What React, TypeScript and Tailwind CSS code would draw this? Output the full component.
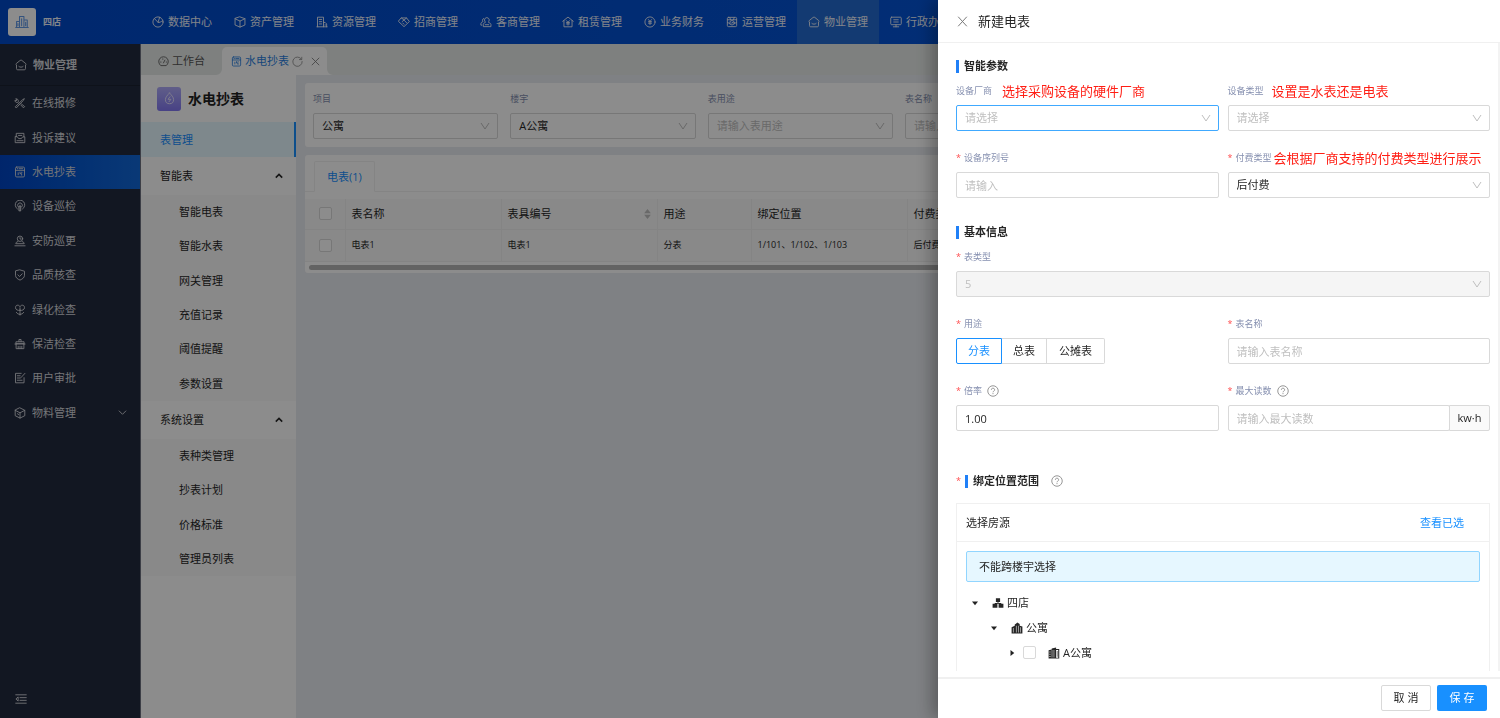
import type { ReactNode } from "react";

type Glyph = ReactNode;

function Icon({ children, className = "size-3" }: { children: ReactNode; className?: string }) {
  return (
    <svg
      viewBox="0 0 16 16"
      fill="none"
      stroke="currentColor"
      strokeWidth="1.2"
      strokeLinecap="round"
      strokeLinejoin="round"
      aria-hidden="true"
      className={`shrink-0 ${className}`}
    >
      {children}
    </svg>
  );
}

const houseSmile: Glyph = (
  <>
    <path d="M7 1.800a1.600 1.600 0 0 1 2 0l5.400 4.400c.4.400.5.800.3 1.400l-.7.400v4.800a1.600 1.600 0 0 1-1.600 1.600H3.600A1.600 1.600 0 0 1 2 12.800V8l-.7-.4c-.2-.6-.1-1 .3-1.400z" />
    <path d="M5.200 10c1.400 1.300 4.200 1.300 5.600 0" />
  </>
);

const meter: Glyph = (
  <>
    <rect x="2" y="1.400" width="12" height="13.200" rx="1.600" />
    <path d="M2 5.800h12M4.400 3.600h.6M7 3.600h4.600M5.600 9v2.600M8 8.200v2h2.200v2M10.400 8.200v.6" />
  </>
);

const navItems: { label: string; icon: Glyph }[] = [
  {
    label: "数据中心",
    icon: (
      <>
        <circle cx="8" cy="8" r="6.800" />
        <path d="M3.200 3.400 8 8.400c1.600.8 3.800-.6 6.400-2.200M8 8.400l2.200-6.600" />
      </>
    ),
  },
  {
    label: "资产管理",
    icon: <path d="M8 1.200 14.600 3.600v8.400L8 14.800 1.400 12V3.600zM1.400 3.600 8 6.800l6.600-3.200M8 6.800v8" />,
  },
  {
    label: "资源管理",
    icon: (
      <>
        <path d="M2 14.400V1.600h8v12.800M1.200 14.400h13.600M10 8.600h2.200l2 2v3.800" />
        <path d="M4.400 4.600h3.200M4.400 7.600h3.200M4.400 10.600h3.200M12.200 11.600v.8" />
      </>
    ),
  },
  {
    label: "招商管理",
    icon: (
      <>
        <path d="M4.600 2.600h6.800L15.200 7.400 8 14.200.8 7.400z" />
        <path d="M4.600 2.600 8 5.400l3.400-2.800M5.600 7.400 8 5.400l3.600 3.800M6.400 9.400l1.600 1.600" />
      </>
    ),
  },
  {
    label: "客商管理",
    icon: (
      <>
        <path d="M6.600 7.400a3.200 3.200 0 1 1 5 0v1.400c1.600.4 3 1.200 3 2.600v2.800H4.400v-2.800c0-1.400 1-2.200 2.200-2.600z" />
        <path d="M4.800 3.400C3 4 2.800 6 4 7.400 2.400 8 1.200 8.800 1.200 10.400v1.800h1.200M7 11.600h4.600" />
      </>
    ),
  },
  {
    label: "租赁管理",
    icon: (
      <>
        <path d="M1 7 8 1.400 15 7M2.600 6v8.400h10.800V6" />
        <path d="M6 6.200 8 8.400l2-2.200M6 8.800h4M6 10.600h4M8 8.400v3.800" />
      </>
    ),
  },
  {
    label: "业务财务",
    icon: (
      <>
        <circle cx="8" cy="8" r="6.800" />
        <path d="M6 4.800 8 7.200l2-2.400M6 7.600h4M6 9.600h4M8 7.200v4.200" />
      </>
    ),
  },
  {
    label: "运营管理",
    icon: (
      <>
        <rect x="1.800" y="1.800" width="12.400" height="12.400" rx="1.600" />
        <circle cx="8" cy="9" r="3" />
        <path d="M2 5h12M5 2l1.200 3M11 2 9.800 5M2 8.400l3 2M14 8.400l-3 2M7 9l.8.8L9.200 8.200" />
      </>
    ),
  },
  { label: "物业管理", icon: houseSmile },
  {
    label: "行政办公",
    icon: (
      <>
        <rect x="1" y="1.600" width="14" height="10" rx="1.200" />
        <path d="M5 5h6M5 8h6M8 11.600v2.800M4.400 14.400h7.200" />
      </>
    ),
  },
];

const sideItems: { label: string; icon: Glyph; expandable?: boolean }[] = [
  {
    label: "在线报修",
    icon: (
      <>
        <path d="M2 12.800 11.400 3.600 13.800 2.200 12.400 4.600 3.400 14.200zM10 9.400l4.200 3.400-1.600 1.600L9 10.600" />
        <path d="M6.600 7 5.600 6c.6-2-1-4-3.400-3.600l1.600 1.600-1.200 1.400L1.400 4.200C1 6.200 2.800 7.800 4.600 7.200l1 1" />
      </>
    ),
  },
  {
    label: "投诉建议",
    icon: <path d="M3 6.400V1.800h10.200v4.600M1.600 6.400v7.800h12.800V6.400l-3 .2-1.600 2.200H6.200L4.600 6.600zM6 4.600h4.400M4 11.600h8" />,
  },
  { label: "水电抄表", icon: meter },
  {
    label: "设备巡检",
    icon: (
      <>
        <path d="M4.600 12A6.400 6.400 0 1 1 11.400 12" />
        <path d="M5.600 9.200a3.200 3.200 0 1 1 4.800 0M8 7v7.400M7 8.400h2v6H7z" />
      </>
    ),
  },
  {
    label: "安防巡更",
    icon: (
      <>
        <circle cx="8" cy="5" r="3.600" />
        <path d="M8 3.400v2h1.600M5 8.800c-1.800.5-2.600 1.400-2.600 2.800h11.200c0-1.400-.8-2.300-2.600-2.800M1.200 14.400h13.600" />
      </>
    ),
  },
  {
    label: "品质核查",
    icon: (
      <>
        <path d="M8 1.200 14 3v5.400c0 3-2.600 5-6 6.400-3.400-1.400-6-3.400-6-6.400V3z" />
        <path d="m5.200 7.800 2.200 2.200 3.600-3.600" />
      </>
    ),
  },
  {
    label: "绿化检查",
    icon: (
      <>
        <path d="M8 8.400C5 9.200 2 7.600 2 4.800c0-2 1.200-3.200 3-3.200 1.400 0 2.400.8 3 2 .6-1.200 1.600-2 3-2 1.800 0 3 1.200 3 3.200 0 2.800-3 4.400-6 3.600z" />
        <path d="M8 5v9.800M8 13.800c-2.200 0-4-1-4.800-2.600M8 13.800c2.200 0 4-1 4.800-2.600" />
      </>
    ),
  },
  {
    label: "保洁检查",
    icon: <path d="M6.600 5V2h2.800v3M2.600 8V5h10.800v3M2.800 8v6.200h10.400V8zM1.200 8h13.600M5.600 14.200V11M8 14.200V11M10.400 14.200V11" />,
  },
  {
    label: "用户审批",
    icon: <path d="M9.600 1.800H2v12.600h11.400V7.600M14.600 1.800 9.400 7.400M4.400 5h3.800M4.400 8h4M4.400 11h6.400" />,
  },
  {
    label: "物料管理",
    expandable: true,
    icon: <path d="M8 1.200 14.400 4.400v7.200L8 14.800l-6.400-3.200V4.400zM1.600 4.400 8 7.800l6.400-3.400M8 7.800v7M4.600 9l1.600 1" />,
  },
];

function Chevron({ className = "" }: { className?: string }) {
  return (
    <svg
      viewBox="0 0 10 10"
      fill="none"
      stroke="currentColor"
      strokeWidth="1"
      aria-hidden="true"
      className={`pointer-events-none size-[10px] shrink-0 ${className}`}
    >
      <path d="M1 2 5 8 9 2" />
    </svg>
  );
}

function SelectBox({
  id,
  value,
  placeholder = false,
  focused = false,
  disabled = false,
}: {
  id: string;
  value: string;
  placeholder?: boolean;
  focused?: boolean;
  disabled?: boolean;
}) {
  return (
    <div className="grid items-center">
      <select
        id={id}
        disabled={disabled}
        className={`col-start-1 row-start-1 h-[26px] w-full appearance-none rounded-[2px] border pr-6 pl-2 text-[11px] leading-4 opacity-100 outline-none ${
          focused ? "border-[#40a9ff]" : "border-[#d9d9d9]"
        } ${disabled ? "bg-[#f5f5f5]" : "bg-white"} ${
          placeholder || disabled ? "text-[#bfbfbf]" : "text-[#262626]"
        }`}
      >
        <option>{value}</option>
      </select>
      <Chevron className="col-start-1 row-start-1 mr-2 justify-self-end text-[#bfbfbf]" />
    </div>
  );
}

function FilterField({ id, label, value, placeholder }: { id: string; label: string; value: string; placeholder?: boolean }) {
  return (
    <div className="flex flex-col gap-1">
      <label htmlFor={id} className="text-[9px] leading-5 text-[#8690b0]">
        {label}
      </label>
      <SelectBox id={id} value={value} placeholder={placeholder} />
    </div>
  );
}

function Help() {
  return (
    <svg viewBox="0 0 16 16" fill="none" stroke="#8c8c8c" strokeWidth="1.2" className="size-3 shrink-0" aria-hidden="true">
      <circle cx="8" cy="8" r="7" />
      <path d="M5.800 6.400a2.200 2.100 0 1 1 3.200 1.800c-.7.400-1 .7-1 1.500M8 10.800v1.400" />
    </svg>
  );
}

function Field({
  id,
  label,
  required = false,
  help = false,
  note,
  children,
}: {
  id: string;
  label: string;
  required?: boolean;
  help?: boolean;
  note?: ReactNode;
  children: ReactNode;
}) {
  return (
    <div className="flex flex-col gap-1">
      <div className="flex h-5 items-center whitespace-nowrap">
        {required && <span className="w-2 text-[9px] leading-5 text-[#ff4d4f]">*</span>}
        <label htmlFor={id} className="text-[9px] leading-5 text-[#8690b0]">
          {label}
        </label>
        {help && (
          <span className="ml-[5px] flex">
            <Help />
          </span>
        )}
        {note}
      </div>
      {children}
    </div>
  );
}

function SectionTitle({ children }: { children: ReactNode }) {
  return (
    <h3 className="flex h-5 items-center gap-[5px] text-[11px] leading-5 font-bold text-[#262626]">
      <span className="h-[13px] w-[3px] bg-[#2080f7]" />
      {children}
    </h3>
  );
}

const inputClass =
  "h-[26px] w-full min-w-0 rounded-[2px] border border-[#d9d9d9] bg-white px-2 text-[11px] leading-4 text-[#262626] outline-none placeholder:text-[#bfbfbf]";

function TopBar() {
  return (
    <header className="flex h-11 shrink-0 items-stretch overflow-hidden bg-linear-to-r from-[#0049c8] to-[#085ade] text-[#eef2fb]">
      <div className="flex w-[141px] shrink-0 items-center gap-[7px] pl-2">
        <div className="flex size-7 items-center justify-center rounded-[3px] bg-white text-[#5f97e6]">
          <Icon className="size-[14px]">
            <path d="M.8 14.200h14.400M1.800 14V7.400h3.400M5.200 14V1.800h5V14M10.200 5.800h3.800V14M3.400 9.600v2.600M7.600 4.400v7.800M12.200 8.200v4" />
          </Icon>
        </div>
        <span className="text-[9px] leading-4 font-bold">四店</span>
      </div>
      <nav className="flex">
        {navItems.map((item) => (
          <a
            key={item.label}
            href="#"
            className={`flex w-[82px] shrink-0 items-center justify-center gap-1 text-[11px] leading-4 whitespace-nowrap ${
              item.label === "物业管理" ? "bg-[#246bd0]" : ""
            }`}
          >
            <Icon>{item.icon}</Icon>
            {item.label}
          </a>
        ))}
      </nav>
    </header>
  );
}

function Sidebar() {
  return (
    <aside className="flex w-[141px] shrink-0 flex-col border-r border-[#6d7180] bg-[#222a3e] text-[#d5d7dc]">
      <div className="flex h-[42px] items-center gap-[6px] border-b border-[#1b2230] pl-[15px] text-[11px] leading-4 font-bold">
        <Icon>{houseSmile}</Icon>
        物业管理
      </div>
      <nav className="grid h-[344px] grid-rows-10">
        {sideItems.map((item) => (
          <a
            key={item.label}
            href="#"
            className={`flex items-center gap-[6px] pr-[13px] pl-[14px] text-[11px] leading-4 ${
              item.label === "水电抄表" ? "bg-linear-to-r from-[#0044c4] to-[#1268d8]" : ""
            }`}
          >
            <Icon>{item.icon}</Icon>
            {item.label}
            {item.expandable && (
              <svg viewBox="0 0 10 10" fill="none" stroke="currentColor" className="ml-auto size-[9px]" aria-hidden="true">
                <path d="M1 3l4 4 4-4" />
              </svg>
            )}
          </a>
        ))}
      </nav>
      <button type="button" aria-label="收起菜单" className="mt-auto mb-[13px] ml-[15px] flex size-3 items-center">
        <Icon>
          <path d="M1 2.400h14M6.600 6.200H15M6.600 9.800H15M1 13.600h14M3.800 5.600 1.200 8l2.600 2.400z" />
        </Icon>
      </button>
    </aside>
  );
}

function TabStrip() {
  return (
    <div className="flex h-[31px] shrink-0 items-end bg-[#e6eae8] text-[11px] leading-4">
      <a href="#" className="flex h-[28px] w-[81px] items-center gap-[3px] pl-[17px] text-[#555]">
        <Icon className="size-[11px]">
          <path d="M3.600 13.600a7 7 0 1 1 8.800 0zM8 10l2-4M3.800 8.800h.6M7 4.200v.6M12 8.800h.4" />
        </Icon>
        工作台
      </a>
      <div className="relative flex h-[28px] items-center gap-[3px] rounded-t-[5px] bg-white pr-[6px] pl-[9px] text-[#2b7fe0]">
        <svg viewBox="0 0 6 6" className="absolute bottom-0 -left-[6px] size-[6px] fill-white" aria-hidden="true">
          <path d="M6 0v6H0a6 6 0 0 0 6-6z" />
        </svg>
        <svg viewBox="0 0 6 6" className="absolute -right-[6px] bottom-0 size-[6px] fill-white" aria-hidden="true">
          <path d="M0 0v6h6a6 6 0 0 1-6-6z" />
        </svg>
        <Icon className="size-[11px]">{meter}</Icon>
        <span>水电抄表</span>
        <button type="button" aria-label="刷新" className="text-[#8c8c8c]">
          <Icon className="size-[11px]">
            <path d="M13.600 4.400A6.800 6.800 0 1 0 14.800 8M14.200 1.800v3.400h-3.400" />
          </Icon>
        </button>
        <button type="button" aria-label="关闭标签" className="ml-1 text-[#777]">
          <Icon className="size-[11px]">
            <path d="M3 3l10 10M13 3 3 13" />
          </Icon>
        </button>
      </div>
    </div>
  );
}

function MenuGroup({ title, children }: { title: string; children: ReactNode }) {
  return (
    <>
      <button type="button" className="flex h-[38px] w-full items-center justify-between pr-[13px] pl-[19px] text-[11px] leading-4 text-[#262626]">
        {title}
        <svg viewBox="0 0 10 10" fill="none" stroke="currentColor" strokeWidth="2" className="size-2" aria-hidden="true">
          <path d="M1 7l4-4 4 4" />
        </svg>
      </button>
      {children}
    </>
  );
}

function SubItem({ label }: { label: string }) {
  return (
    <a href="#" className="flex items-center pl-[38px] text-[11px] leading-4 text-[#262626]">
      {label}
    </a>
  );
}

function ModuleMenu() {
  return (
    <nav className="w-[155px] shrink-0 bg-white">
      <div className="flex h-[47px] items-center gap-[7px] pl-4">
        <div className="flex size-6 items-center justify-center rounded-[3px] bg-linear-to-b from-[#b0abf8] to-[#8377f2] text-[#e4e0ff]">
          <Icon className="size-[13px]">
            <path d="M8 1.200c2.600 3 5 5 5 8.200a5 5 0 0 1-10 0C3 6.200 5.400 4.200 8 1.200z" />
            <path d="M8.600 5.800 6.200 9h3.600l-2.400 3" />
          </Icon>
        </div>
        <h1 className="text-sm leading-5 font-bold text-[#222]">水电抄表</h1>
      </div>
      <a href="#" className="flex h-[35px] items-center border-r-2 border-[#1890ff] bg-[#e6f7ff] pl-[19px] text-[11px] leading-4 text-[#1890ff]">
        表管理
      </a>
      <MenuGroup title="智能表">
        <div className="grid h-[206px] grid-rows-6 bg-[#fafafa]">
          {["智能电表", "智能水表", "网关管理", "充值记录", "阈值提醒", "参数设置"].map((l) => (
            <SubItem key={l} label={l} />
          ))}
        </div>
      </MenuGroup>
      <MenuGroup title="系统设置">
        <div className="grid h-[137px] grid-rows-4 bg-[#fafafa]">
          {["表种类管理", "抄表计划", "价格标准", "管理员列表"].map((l) => (
            <SubItem key={l} label={l} />
          ))}
        </div>
      </MenuGroup>
    </nav>
  );
}

function CheckBox({ label, className = "" }: { label: string; className?: string }) {
  return (
    <input
      type="checkbox"
      aria-label={label}
      className={`block size-[13px] shrink-0 appearance-none rounded-[2px] border border-[#d9d9d9] bg-white ${className}`}
    />
  );
}

function MeterTable() {
  const head = "border-r border-b border-[#f0f0f0] px-[6px] text-left font-normal";
  const cell = "border-r border-b border-[#f0f0f0] px-[6px] text-left";
  return (
    <section className="mt-2 overflow-hidden rounded-[3px] bg-white pt-[6px]">
      <div className="flex h-[31px] border-b border-[#f0f0f0] pl-[9px]">
        <button type="button" className="h-[31px] rounded-t-[2px] border border-b-white border-[#f0f0f0] bg-white px-3 text-[11px] leading-4 text-[#1890ff]">
          电表(1)
        </button>
      </div>
      <table className="mt-[7px] w-full table-fixed border-collapse bg-[#fafafa] whitespace-nowrap text-[#262626]">
        <colgroup>
          <col className="w-10" />
          <col className="w-[156px]" />
          <col className="w-[156px]" />
          <col className="w-[94px]" />
          <col className="w-[156px]" />
          <col />
        </colgroup>
        <thead>
          <tr className="h-[30px] text-[11px] leading-4">
            <th className="border-r border-b border-[#f0f0f0] pl-[14px]">
              <CheckBox label="全选" />
            </th>
            <th className={head}>表名称</th>
            <th className={head}>
              <div className="flex items-center justify-between">
                表具编号
                <svg viewBox="0 0 8 12" className="h-[10px] w-[7px] fill-[#bfbfbf]" aria-hidden="true">
                  <path d="M4 0 8 5H0zM4 12 8 7H0z" />
                </svg>
              </div>
            </th>
            <th className={head}>用途</th>
            <th className={head}>绑定位置</th>
            <th className={head}>付费类型</th>
          </tr>
        </thead>
        <tbody>
          <tr className="h-8 text-[9px] leading-4">
            <td className="border-r border-b border-[#f0f0f0] pl-[14px]">
              <CheckBox label="选择电表1" />
            </td>
            <td className={cell}>电表1</td>
            <td className={cell}>电表1</td>
            <td className={cell}>分表</td>
            <td className={cell}>1/101、1/102、1/103</td>
            <td className={cell}>后付费</td>
          </tr>
        </tbody>
      </table>
      <div className="flex h-[11px] items-center px-1">
        <div className="h-[5px] flex-1 rounded-full bg-[#b4b4b4]" />
      </div>
    </section>
  );
}

function TreeRow({ indent, open, icon, label, check }: { indent: string; open: boolean; icon: ReactNode; label: string; check?: boolean }) {
  return (
    <li className={`flex h-[25px] items-center text-[11px] leading-4 text-[#262626] ${indent}`}>
      <button type="button" aria-label={open ? "收起" : "展开"} className="flex size-[18px] items-center justify-center">
        <svg viewBox="0 0 8 8" className="size-[6px] fill-[#222]" aria-hidden="true">
          {open ? <path d="M0 2h8L4 7z" /> : <path d="M2 0v8l5-4z" />}
        </svg>
      </button>
      {check ? <CheckBox label={label} className="mr-3 ml-[2px]" /> : <span className="w-2" />}
      <svg viewBox="0 0 16 16" className="mr-[3px] size-3 fill-[#262626]" aria-hidden="true">
        {icon}
      </svg>
      {label}
    </li>
  );
}

function Drawer() {
  return (
    <aside
      role="dialog"
      aria-label="新建电表"
      className="fixed inset-y-0 right-0 flex w-[562px] flex-col bg-white shadow-[-6px_0_16px_rgba(0,0,0,0.3)]"
    >
      <div className="flex h-[43px] shrink-0 items-center gap-[9px] border-b border-[#f0f0f0] pl-[18px]">
        <button type="button" aria-label="关闭" className="text-[#777]">
          <Icon className="size-[13px]">
            <path d="M3 2.500l10 11M13 2.500l-10 11" />
          </Icon>
        </button>
        <h2 className="text-[13px] leading-5 text-[#262626]">新建电表</h2>
      </div>

      <form className="mb-[6px] min-h-0 flex-1 overflow-hidden border-r-2 border-[#f3f3f3] pt-[13px] pr-2 pl-[18px]">
        <SectionTitle>智能参数</SectionTitle>
        <div className="mt-[5px] grid grid-cols-2 gap-x-[9px] gap-y-[17px]">
          <Field id="vendor" label="设备厂商" note={<span className="ml-[10px] text-[13px] leading-5 text-[#ff1e14]">选择采购设备的硬件厂商</span>}>
            <SelectBox id="vendor" value="请选择" placeholder focused />
          </Field>
          <Field id="kind" label="设备类型" note={<span className="ml-2 text-[13px] leading-5 text-[#ff1e14]">设置是水表还是电表</span>}>
            <SelectBox id="kind" value="请选择" placeholder />
          </Field>
          <Field id="serial" label="设备序列号" required>
            <input id="serial" placeholder="请输入" className={inputClass} />
          </Field>
          <Field id="pay" label="付费类型" required note={<span className="ml-[2px] text-[13px] leading-5 text-[#ff1e14]">会根据厂商支持的付费类型进行展示</span>}>
            <SelectBox id="pay" value="后付费" />
          </Field>
        </div>

        <div className="mt-6">
          <SectionTitle>基本信息</SectionTitle>
        </div>
        <div className="mt-[5px] grid grid-cols-2 gap-x-[9px] gap-y-[17px]">
          <div className="col-span-2">
            <Field id="type" label="表类型" required>
              <SelectBox id="type" value="5" disabled />
            </Field>
          </div>
          <Field id="usage-0" label="用途" required>
            <div className="flex h-[26px] text-[11px] leading-6 text-[#262626]">
              {["分表", "总表", "公摊表"].map((name, i) => (
                <label
                  key={name}
                  className={`border ${
                    i === 0
                      ? "rounded-l-[2px] border-[#1890ff] px-[11px] text-[#1890ff]"
                      : i === 1
                        ? "border-l-0 border-[#d9d9d9] px-[11px]"
                        : "rounded-r-[2px] border-l-0 border-[#d9d9d9] px-3"
                  }`}
                >
                  <input id={`usage-${i}`} type="radio" name="usage" defaultChecked={i === 0} className="sr-only" />
                  {name}
                </label>
              ))}
            </div>
          </Field>
          <Field id="name" label="表名称" required>
            <input id="name" placeholder="请输入表名称" className={inputClass} />
          </Field>
          <Field id="ratio" label="倍率" required help>
            <input id="ratio" defaultValue="1.00" className={inputClass} />
          </Field>
          <Field id="max" label="最大读数" required help>
            <div className="flex">
              <input id="max" placeholder="请输入最大读数" className={inputClass} />
              <span className="-ml-px flex h-[26px] w-[41px] shrink-0 items-center justify-center rounded-r-[2px] border border-[#d9d9d9] bg-[#fafafa] text-[11px] leading-4 text-[#262626]">
                kw·h
              </span>
            </div>
          </Field>
        </div>

        <div className="mt-10 flex items-center">
          <span className="w-[9px] text-[9px] leading-5 text-[#ff4d4f]">*</span>
          <SectionTitle>绑定位置范围</SectionTitle>
          <span className="ml-3 flex">
            <Help />
          </span>
        </div>
        <div className="mt-3 border border-[#f0f0f0] pb-10">
          <div className="flex h-[38px] items-center justify-between border-b border-[#f0f0f0] pr-[25px] pl-[9px] text-[11px] leading-4">
            <span className="text-[#262626]">选择房源</span>
            <a href="#" className="text-[#1890ff]">
              查看已选
            </a>
          </div>
          <div className="px-[9px] pt-[9px]">
            <p className="flex h-[31px] items-center rounded-[2px] border border-[#91d5ff] bg-[#e6f7ff] pl-3 text-[11px] leading-4 text-[#262626]">
              不能跨楼宇选择
            </p>
            <ul className="mt-2">
              <TreeRow
                indent=""
                open
                label="四店"
                icon={<path d="M5.200 1.600h5.600v5H5.200zM.8 9h6.400v5.400H.8zM8.800 9h6.400v5.400H8.800zM7.400 6.600h1.200V8H7.400zM3.600 8h8.800v1H3.600z" />}
              />
              <TreeRow
                indent="pl-[19px]"
                open
                label="公寓"
                icon={
                  <path
                    fillRule="evenodd"
                    d="M5 3.400 6.600 2.400 8.400.8 11.600 2.600V5l3.600 1v9.200H.8V7L5 5zM6.600 5v9h.7V5zM9.400 5v9h.7V5zM12.400 7v7h.7V7zM2.600 8v6h.7V8z"
                  />
                }
              />
              <TreeRow
                indent="pl-[37px]"
                open={false}
                check
                label="A公寓"
                icon={
                  <path
                    fillRule="evenodd"
                    d="M.8 4.400 5 3.200V2l5.800-1.400V2.600H15v12.600H.8zM2 6v1.400h1.200V6zm0 3v1.400h1.200V9zm0 3v1.400h1.200V12zM5 4v10h.7V4zM7.600 4v10h.7V4zM10.800 4v10.200h2.800V4zm1 1.200h.8V13h-.8z"
                  />
                }
              />
            </ul>
          </div>
        </div>
      </form>

      <div className="flex h-[41px] shrink-0 items-start justify-end gap-[6px] border-t-2 border-[#f0f0f0] pt-[6px] pr-[13px] text-[11px] leading-4">
        <button type="button" className="h-[26px] w-[50px] rounded-[2px] border border-[#d9d9d9] bg-white text-[#262626]">
          取 消
        </button>
        <button type="button" className="h-[26px] w-[50px] rounded-[2px] bg-[#1890ff] text-white">
          保 存
        </button>
      </div>
    </aside>
  );
}

export default function App() {
  return (
    <div className="flex h-screen flex-col overflow-hidden bg-[#e8ebf0] font-['Open_Sans','Noto_Sans_CJK_SC',sans-serif]">
      <TopBar />
      <div className="flex min-h-0 flex-1">
        <Sidebar />
        <div className="flex min-w-0 flex-1 flex-col">
          <TabStrip />
          <div className="flex min-h-0 flex-1">
            <ModuleMenu />
            <main className="min-w-0 flex-1 pt-2 pr-[7px] pl-[9px]">
              <section className="grid grid-cols-6 gap-3 rounded-[3px] bg-white px-2 pt-[6px] pb-2">
                <FilterField id="f-project" label="项目" value="公寓" />
                <FilterField id="f-building" label="楼宇" value="A公寓" />
                <FilterField id="f-usage" label="表用途" value="请输入表用途" placeholder />
                <FilterField id="f-name" label="表名称" value="请输入表名称" placeholder />
              </section>
              <MeterTable />
            </main>
          </div>
        </div>
      </div>
      <div className="fixed inset-0 bg-black/45" />
      <Drawer />
    </div>
  );
}
